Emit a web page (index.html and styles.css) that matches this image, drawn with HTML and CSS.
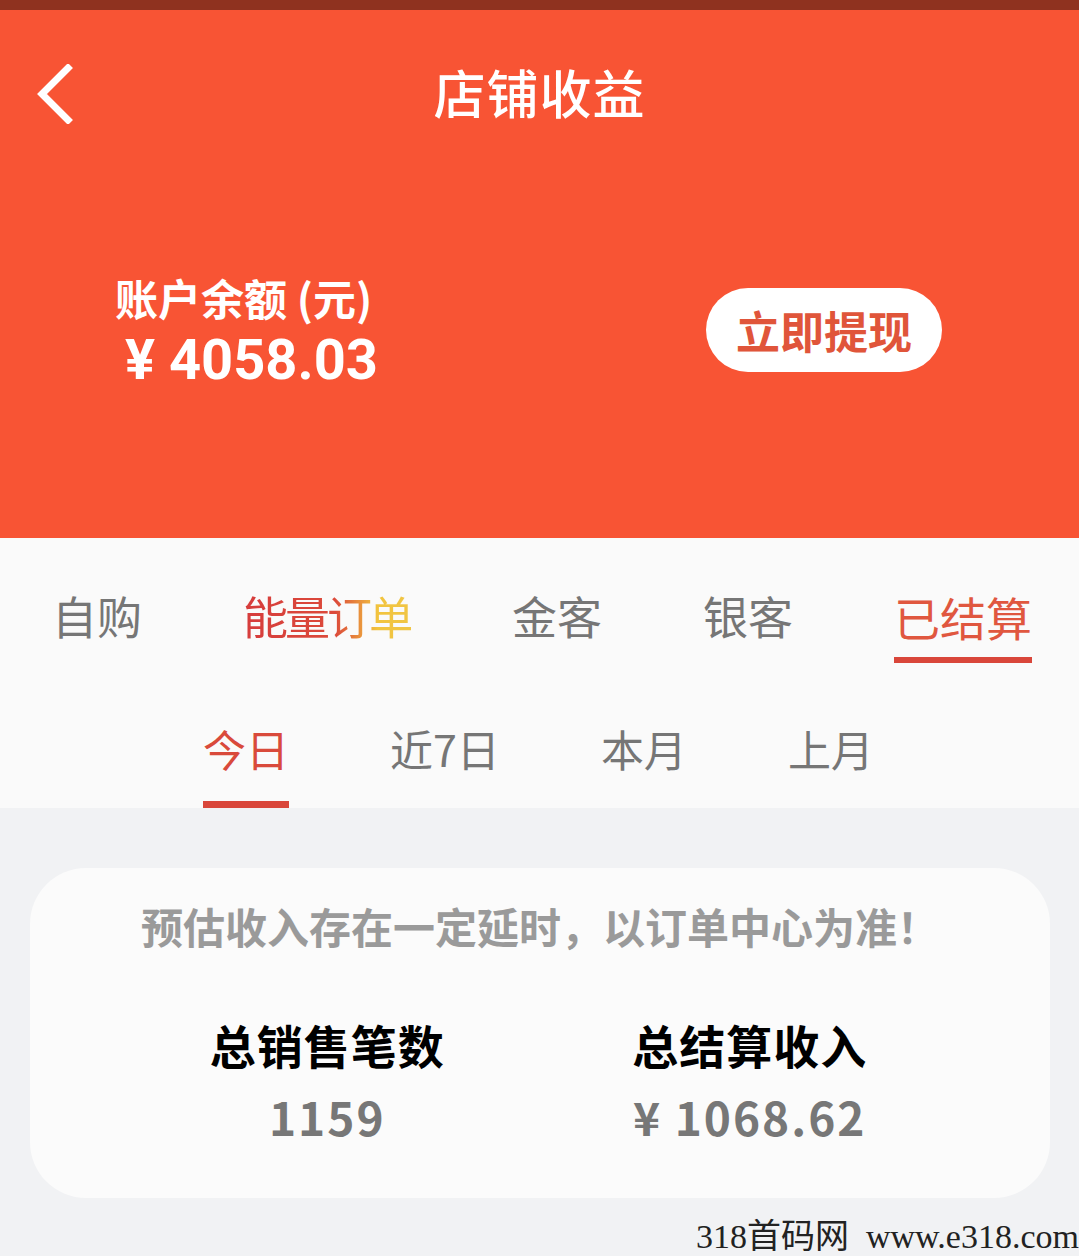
FILE: index.html
```html
<!DOCTYPE html>
<html lang="zh-CN">
    <head>
        <meta charset="UTF-8" />
        <meta name="viewport" content="width=device-width, initial-scale=1.0" />
        <title>店铺收益</title>
        <link rel="stylesheet" href="styles.css">
    </head>
    <body>
        <div class="page">
            <header class="header">
                <div class="status-strip"></div>
                <div class="nav">
                    <a class="back" href="#">
                        <svg width="38" height="60" viewBox="0 0 38 60">
                            <polyline points="32,4 6,30 32,56" fill="none" stroke="#ffffff" stroke-width="7" stroke-linecap="square" />
                        </svg>
                    </a>
                    <h1 class="nav-title">店铺收益</h1>
                </div>
                <div class="balance">
                    <div class="balance-info">
                        <div class="balance-label">账户余额 (元)</div>
                        <div class="balance-amount">¥ 4058.03</div>
                    </div>
                    <button class="withdraw">立即提现</button>
                </div>
            </header>

            <section class="filters">
                <nav class="tabs">
                    <span class="tab">自购</span>
                    <span class="tab tab-energy">能量订单</span>
                    <span class="tab">金客</span>
                    <span class="tab">银客</span>
                    <span class="tab active">已结算</span>
                </nav>
                <nav class="periods">
                    <span class="period active">今日</span>
                    <span class="period">近7日</span>
                    <span class="period">本月</span>
                    <span class="period">上月</span>
                </nav>
            </section>

            <main class="content">
                <div class="summary-card">
                    <p class="notice">预估收入存在一定延时，以订单中心为准！</p>
                    <div class="stats">
                        <div class="stat">
                            <div class="stat-label">总销售笔数</div>
                            <div class="stat-value">1159</div>
                        </div>
                        <div class="stat">
                            <div class="stat-label">总结算收入</div>
                            <div class="stat-value">¥ 1068.62</div>
                        </div>
                    </div>
                </div>
            </main>

            <div class="watermark">318首码网&nbsp;&nbsp;www.e318.com</div>
        </div>
    </body>
</html>
```

FILE: styles.css
```css
* {
    box-sizing: border-box;
}

body {
    margin: 0;
    font-family: "Noto Sans CJK SC", "Noto Sans", sans-serif;
    background-color: #f1f2f4;
}

.page {
    position: relative;
    min-height: 1256px;
    overflow: hidden;
}

/* orange header with balance */
.header {
    background-color: #f85434;
    padding-bottom: 60px;
}

.status-strip {
    height: 10px;
    background-color: #8f321f;
}

.nav {
    position: relative;
    height: 172px;
    display: flex;
    align-items: center;
    justify-content: center;
    padding-bottom: 10px;
}

.back {
    position: absolute;
    left: 36px;
    top: 54px;
    display: block;
}

.nav-title {
    margin: 0;
    font-size: 52px;
    font-weight: 500;
    color: #ffffff;
    letter-spacing: 1px;
}

.balance {
    height: 296px;
    display: flex;
    align-items: center;
    justify-content: space-between;
    padding: 0 137px 0 115px;
}

.balance-label {
    font-size: 43px;
    font-weight: 700;
    line-height: 60px;
    color: #ffffff;
}

.balance-amount {
    font-family: Roboto, "Noto Sans CJK SC", sans-serif;
    font-size: 56px;
    font-weight: 700;
    line-height: 66px;
    color: #ffffff;
    padding-left: 10px;
}

.withdraw {
    width: 236px;
    height: 84px;
    border: none;
    border-radius: 42px;
    background-color: #ffffff;
    color: #e0553a;
    font-family: inherit;
    font-size: 44px;
    font-weight: 700;
    padding: 0;
}

/* tab rows */
.filters {
    background-color: #fafafa;
    padding-top: 50px;
}

.tabs {
    display: flex;
    gap: 101px;
    padding-left: 52px;
}

.tab {
    font-size: 45px;
    line-height: 56px;
    color: #767676;
    padding-bottom: 13px;
    border-bottom: 6px solid transparent;
}

.tab-energy {
    letter-spacing: -3px;
    background: linear-gradient(90deg, #d63c3c 0%, #dc4a3a 55%, #f2c43e 80%, #f0c545 100%);
    -webkit-background-clip: text;
    background-clip: text;
    color: transparent;
}

.tab.active {
    font-size: 46px;
    color: #e0573f;
    border-bottom-color: #d9463a;
}

.periods {
    display: flex;
    gap: 101px;
    padding-left: 203px;
    margin-top: 57px;
}

.period {
    font-size: 43px;
    line-height: 56px;
    color: #767676;
    padding-bottom: 25px;
    border-bottom: 7px solid transparent;
}

.period.active {
    color: #d94a3b;
    border-bottom-color: #d9463a;
}

/* summary card */
.content {
    padding: 60px 29px 0 30px;
}

.summary-card {
    background-color: #fbfbfb;
    border-radius: 56px;
    height: 330px;
    padding-top: 30px;
}

.notice {
    margin: 0;
    text-align: center;
    font-size: 42px;
    font-weight: 700;
    line-height: 56px;
    color: #9a9a9a;
}

.stats {
    display: grid;
    grid-template-columns: 1fr 1fr;
    padding: 0 89px 0 86px;
    margin-top: 60px;
}

.stat {
    text-align: center;
}

.stat-label {
    font-size: 46px;
    font-weight: 700;
    line-height: 60px;
    color: #000000;
    letter-spacing: 1px;
}

.stat-value {
    font-size: 46px;
    font-weight: 700;
    line-height: 60px;
    margin-top: 12px;
    color: #777777;
    letter-spacing: 2px;
}

.watermark {
    position: absolute;
    right: 0;
    bottom: 0;
    font-family: "Liberation Serif", "Noto Sans CJK SC", serif;
    font-size: 34px;
    line-height: 38px;
    color: #222222;
    white-space: nowrap;
}
```
